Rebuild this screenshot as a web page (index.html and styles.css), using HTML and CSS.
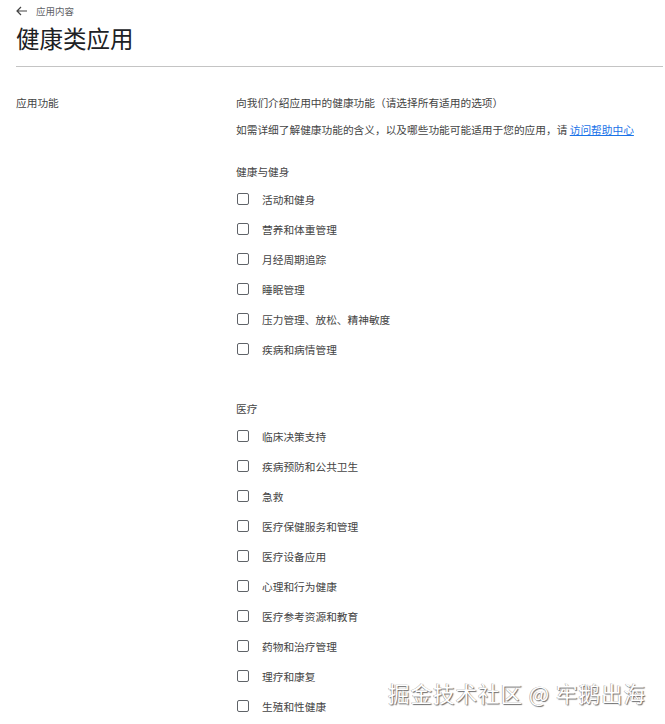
FILE: index.html
```html
<!DOCTYPE html>
<html lang="zh-CN">
<head>
    <meta charset="UTF-8">
    <meta name="viewport" content="width=device-width, initial-scale=1.0">
    <title>健康类应用</title>
    <link rel="stylesheet" href="styles.css">
</head>
<body>

    <div class="page">
        <!-- 顶部 -->
        <div class="page-header">
            <a class="back-link" href="#">
                <svg class="back-arrow" width="12" height="10" viewBox="0 0 12 10">
                    <path d="M11 5H1.5M5 1L1 5l4 4" fill="none" stroke="#444" stroke-width="1.2"/>
                </svg>
                <span>应用内容</span>
            </a>
            <h1 class="page-title">健康类应用</h1>
        </div>

        <div class="page-body">
            <div class="field-label">应用功能</div>

            <div class="field-content">
                <p class="intro">向我们介绍应用中的健康功能（请选择所有适用的选项）</p>
                <p class="intro intro-sub">如需详细了解健康功能的含义，以及哪些功能可能适用于您的应用，请 <a href="#">访问帮助中心</a></p>

                <div class="group">
                    <p class="group-title">健康与健身</p>
                    <label class="check-row"><span class="check-box"></span>活动和健身</label>
                    <label class="check-row"><span class="check-box"></span>营养和体重管理</label>
                    <label class="check-row"><span class="check-box"></span>月经周期追踪</label>
                    <label class="check-row"><span class="check-box"></span>睡眠管理</label>
                    <label class="check-row"><span class="check-box"></span>压力管理、放松、精神敏度</label>
                    <label class="check-row"><span class="check-box"></span>疾病和病情管理</label>
                </div>

                <div class="group group-medical">
                    <p class="group-title">医疗</p>
                    <label class="check-row"><span class="check-box"></span>临床决策支持</label>
                    <label class="check-row"><span class="check-box"></span>疾病预防和公共卫生</label>
                    <label class="check-row"><span class="check-box"></span>急救</label>
                    <label class="check-row"><span class="check-box"></span>医疗保健服务和管理</label>
                    <label class="check-row"><span class="check-box"></span>医疗设备应用</label>
                    <label class="check-row"><span class="check-box"></span>心理和行为健康</label>
                    <label class="check-row"><span class="check-box"></span>医疗参考资源和教育</label>
                    <label class="check-row"><span class="check-box"></span>药物和治疗管理</label>
                    <label class="check-row"><span class="check-box"></span>理疗和康复</label>
                    <label class="check-row"><span class="check-box"></span>生殖和性健康</label>
                </div>
            </div>
        </div>

        <div class="watermark">掘金技术社区 @ 牢鹅出海</div>
    </div>

</body>
</html>
```

FILE: styles.css
```css
/* 基础 */
body {
    margin: 0;
    font-family: "Noto Sans CJK SC", "Noto Sans", sans-serif;
    color: #444;
    background: #fff;
}

p {
    margin: 0;
}

.page {
    position: relative;
    height: 724px;
    overflow: hidden;
    padding: 0 2px 0 16px;
}

/* 顶部 */
.page-header {
    padding-top: 4px;
    border-bottom: 1px solid #c4c4c4;
    height: 62px;
}

.back-link {
    display: flex;
    align-items: center;
    gap: 8px;
    height: 14px;
    font-size: 9.5px;
    color: #5f6368;
    text-decoration: none;
}

.page-title {
    margin: 4px 0 0;
    font-size: 23.5px;
    font-weight: 400;
    line-height: 32px;
    color: #202124;
}

/* 内容 */
.page-body {
    display: grid;
    grid-template-columns: 220px 1fr;
    padding-top: 26px;
    font-size: 10.7px;
}

.field-label {
    line-height: 20px;
}

.intro {
    line-height: 20px;
}

.intro-sub {
    margin-top: 7px;
}

.intro-sub a {
    color: #1a73e8;
}

.group {
    margin-top: 22px;
}

.group-medical {
    margin-top: 35px;
}

.group-title {
    line-height: 20px;
    margin-bottom: 2px;
}

.check-row {
    display: flex;
    align-items: center;
    height: 30px;
    gap: 13px;
}

.check-box {
    width: 10px;
    height: 10px;
    margin-left: 1px;
    border: 1.5px solid #5f6368;
    border-radius: 2px;
}

/* 水印 */
.watermark {
    position: absolute;
    top: 677px;
    left: 388px;
    font-size: 21.5px;
    color: #fff;
    letter-spacing: 1px;
    text-shadow: 1px 1px 1px #6b6b6b, -0.5px -0.5px 0.5px #9a9a9a;
}
```
